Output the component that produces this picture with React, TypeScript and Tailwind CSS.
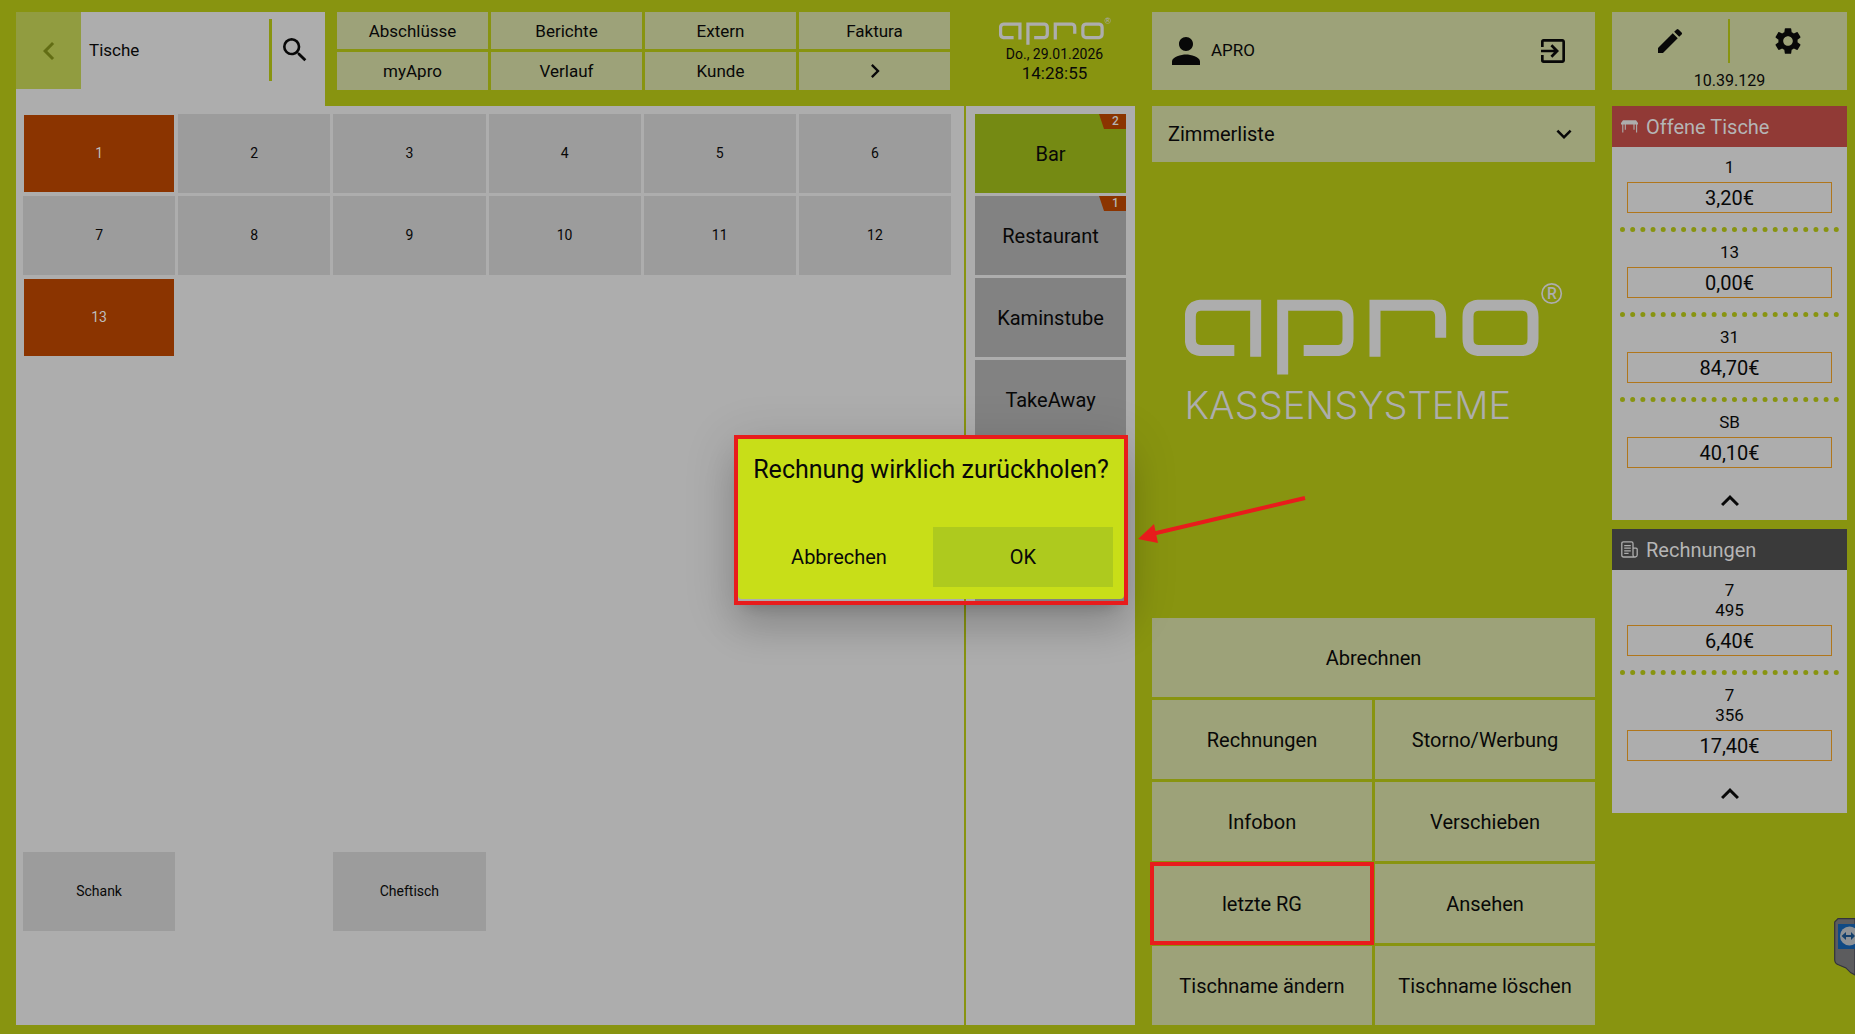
import React from "react";
import {
  MdChevronLeft,
  MdChevronRight,
  MdEdit,
  MdExitToApp,
  MdExpandLess,
  MdExpandMore,
  MdPerson,
  MdSearch,
  MdSettings,
} from "react-icons/md";

const NAV = ["Abschlüsse", "Berichte", "Extern", "Faktura", "myApro", "Verlauf", "Kunde"];

const TABLES: { name: string; open?: boolean; place?: string }[] = [
  { name: "1", open: true },
  { name: "2" },
  { name: "3" },
  { name: "4" },
  { name: "5" },
  { name: "6" },
  { name: "7" },
  { name: "8" },
  { name: "9" },
  { name: "10" },
  { name: "11" },
  { name: "12" },
  { name: "13", open: true },
  { name: "Schank", place: "col-start-1 row-start-10" },
  { name: "Cheftisch", place: "col-start-3 row-start-10" },
];

const AREAS: { name: string; count?: number; active?: boolean }[] = [
  { name: "Bar", count: 2, active: true },
  { name: "Restaurant", count: 1 },
  { name: "Kaminstube" },
  { name: "TakeAway" },
];

const ACTIONS = [
  "Abrechnen",
  "Rechnungen",
  "Storno/Werbung",
  "Infobon",
  "Verschieben",
  "letzte RG",
  "Ansehen",
  "Tischname ändern",
  "Tischname löschen",
];

const OPEN_TABLES = [
  { lines: ["1"], amount: "3,20€" },
  { lines: ["13"], amount: "0,00€" },
  { lines: ["31"], amount: "84,70€" },
  { lines: ["SB"], amount: "40,10€" },
];

const INVOICES = [
  { lines: ["7", "495"], amount: "6,40€" },
  { lines: ["7", "356"], amount: "17,40€" },
];

function AproLogo({ className }: { className: string }) {
  return (
    <svg viewBox="134 66 1134 278" className={className} role="img" aria-label="apro">
      <g fill="none" stroke="#adadad" strokeWidth="33">
        <path d="M282 271H180Q150 268 150 236V170Q150 138 180 135H346V290" />
        <path d="M427 343V135H595Q623 138 623 170V236Q623 268 595 271H490" />
        <path d="M704 290V135H873Q901 138 901 170V233" />
        <path d="M1013 135H1148Q1178 138 1178 170V236Q1178 268 1148 271H1013Q983 268 983 236V170Q983 138 1013 135Z" />
      </g>
      <circle cx="1234" cy="100" r="29" fill="none" stroke="#adadad" strokeWidth="5" />
      <text x="1235" y="117" textAnchor="middle" fontSize="47" fontWeight="500" fill="#adadad">
        R
      </text>
    </svg>
  );
}

function TableIcon() {
  return (
    <svg viewBox="0 0 17 13" className="h-[13px] w-[17px]" aria-hidden="true">
      <path d="M2 0.3H15L17 3V4.6H0V3Z" fill="#adadad" />
      <path d="M1.8 4V12.6M15.6 4V12.6M4.3 4V9.8M13 4V9.8" stroke="#adadad" strokeWidth="1.1" />
    </svg>
  );
}

function InvoiceIcon() {
  return (
    <svg viewBox="0 0 17 17" className="h-[17px] w-[17px]" aria-hidden="true" fill="none" stroke="#adadad" strokeWidth="1.3">
      <path d="M14.5 16H2.6Q0.8 16 0.8 14.3V2.4Q0.8 0.8 2.4 0.8H10.4Q12 0.8 12 2.4V14.2Q12.2 16 14.2 16Q16.2 15.8 16.2 14V8.3Q16.2 7.2 15 7.2H12" />
      <path d="M3.2 4.6H9.8M3.2 7.2H9.8M3.2 9.8H9.8M3.2 12.3H7.6" />
    </svg>
  );
}

function SideCard({
  title,
  icon,
  headClass,
  entries,
}: {
  title: string;
  icon: React.ReactNode;
  headClass: string;
  entries: { lines: string[]; amount: string }[];
}) {
  return (
    <section className="bg-[#adadad]">
      <h2 className={`flex h-[41px] items-center gap-2 pl-[9px] text-[20px] text-[#b5b5b5] ${headClass}`}>
        {icon}
        {title}
      </h2>
      <ul>
        {entries.map((e, i) => (
          <li key={i} className="px-2 pt-[10px]">
            {e.lines.map((l) => (
              <div key={l} className="text-center text-[17px] leading-5">
                {l}
              </div>
            ))}
            <button className="mx-[7px] mt-[5px] mb-[14px] flex h-[31px] w-[calc(100%-14px)] items-center justify-center border border-[#b0761c] text-[20px]">
              {e.amount}
            </button>
            {i < entries.length - 1 && <div className="border-b-[5px] border-dotted border-[#889410]" />}
          </li>
        ))}
      </ul>
      <button aria-label={`${title} einklappen`} className="flex h-[38px] w-full items-center justify-center">
        <MdExpandLess className="size-9" />
      </button>
    </section>
  );
}

function ConfirmDialog() {
  return (
    <div className="fixed inset-0 z-20 flex items-center justify-center pt-1.5 pl-[7px]">
      <div className="relative border-4 border-[#e81c1c] pb-0.5">
        <div
          role="dialog"
          aria-modal="true"
          aria-labelledby="confirm-title"
          className="h-[160px] w-[386px] rounded-b bg-[#c8de18] px-[11px]"
        >
          <h1 id="confirm-title" className="pt-[15px] text-center text-[25px] leading-8 whitespace-nowrap">
            Rechnung wirklich zurückholen?
          </h1>
          <div className="mt-[41px] grid h-[60px] grid-cols-2 gap-1 text-[20px]">
            <button>Abbrechen</button>
            <button className="bg-[#aeca1e]">OK</button>
          </div>
        </div>
        <div className="absolute inset-0 -z-10 shadow-[0_11px_15px_-7px_rgba(0,0,0,0.2),0_24px_38px_3px_rgba(0,0,0,0.14),0_9px_46px_8px_rgba(0,0,0,0.12)]" />
        <svg viewBox="0 0 170 50" className="absolute top-[57px] left-[399px] h-[50px] w-[170px]" aria-hidden="true">
          <path d="M168 2L15 38" stroke="#e81c1c" strokeWidth="4" />
          <path d="M1 43L17 28L21 47Z" fill="#e81c1c" />
        </svg>
      </div>
    </div>
  );
}

export default function App() {
  return (
    <div className="min-h-screen bg-[#889410] font-['Roboto',sans-serif] text-[#080808]">
      <main className="grid min-h-screen grid-cols-[1119fr_443fr_235fr] gap-x-[17px] pt-3 pr-2 pb-[9px] pl-4">
        <div className="flex flex-col">
          <header className="flex h-[94px]">
            <div className="flex w-[309px] items-start bg-[#adadad]">
              <button aria-label="Zurück" className="flex h-[77px] w-[65px] items-center justify-center bg-[#919c40] text-[#626d14]">
                <MdChevronLeft className="size-9" />
              </button>
              <div className="flex h-[77px] flex-1 items-center pl-2 text-[17px]">Tische</div>
              <button aria-label="Suchen" className="mt-[7px] flex h-[62px] w-14 items-center border-l-[3px] border-[#889410] pl-[7px]">
                <MdSearch className="size-8" />
              </button>
            </div>
            <nav className="ml-3 grid h-[78px] flex-1 grid-cols-4 gap-[3px] text-[17px]">
              {NAV.map((n) => (
                <button key={n} className="bg-[#9da279] pt-0.5">
                  {n}
                </button>
              ))}
              <button aria-label="Weiter" className="flex items-center justify-center bg-[#9da279]">
                <MdChevronRight className="size-7" />
              </button>
            </nav>
            <div className="flex w-[185px] flex-col items-center pt-[5px] pl-6">
              <AproLogo className="h-7 w-[112px]" />
              <div className="pt-px text-[14px] leading-4">Do., 29.01.2026</div>
              <div className="text-[17px] leading-[22px]">14:28:55</div>
            </div>
          </header>
          <div className="flex flex-1 bg-[#adadad]">
            <div className="grid flex-1 auto-rows-[79px] grid-cols-6 gap-[3px] pt-2 pr-[13px] pl-[7px] text-[14px]">
              {TABLES.map((t) => (
                <button
                  key={t.name}
                  className={`${t.place ?? ""} ${
                    t.open ? "m-px bg-[#8b3400] text-[#bdbdbd]" : "bg-[#9c9c9c]"
                  }`}
                >
                  {t.name}
                </button>
              ))}
            </div>
            <div className="flex w-[171px] flex-col gap-[3px] border-l-2 border-[#889410] px-[9px] pt-2 text-[20px]">
              {AREAS.map((a) => (
                <button key={a.name} className={`relative h-[79px] ${a.active ? "bg-[#758a13]" : "bg-[#828282]"}`}>
                  {a.name}
                  {a.count && (
                    <span className="absolute top-0 right-0 h-[15px] w-[27px] bg-[#8b3400] pl-[6px] text-center text-[12px] leading-[15px] font-medium text-[#b5b5b5] [clip-path:polygon(0_0,100%_0,100%_100%,5px_100%)]">
                      {a.count}
                    </span>
                  )}
                </button>
              ))}
              <div className="h-[79px] bg-[#828282]" />
              <div className="h-[79px] bg-[#828282]" />
            </div>
          </div>
        </div>

        <div className="flex flex-col">
          <header className="flex h-[78px] items-center bg-[#9da279] pr-[26px] pl-[13px] text-[17px]">
            <MdPerson className="size-[42px]" />
            <span className="ml-1 flex-1">APRO</span>
            <button aria-label="Abmelden">
              <MdExitToApp className="size-8" />
            </button>
          </header>
          <div className="relative mt-4">
            <select aria-label="Zimmerliste" className="h-14 w-full appearance-none bg-[#9da279] pl-4 text-[20px]">
              <option>Zimmerliste</option>
            </select>
            <MdExpandMore className="pointer-events-none absolute top-[13px] right-4 size-[30px]" />
          </div>
          <div className="flex flex-1 flex-col items-center pt-[120px]">
            <AproLogo className="h-[93px] w-[378px]" />
            <div className="w-[378px] pt-[10px] font-['Inter',sans-serif] text-[38px] leading-10 font-light text-[#adadad]">
              KASSENSYSTEME
            </div>
          </div>
          <div className="grid auto-rows-[79px] grid-cols-2 gap-[3px] text-[20px]">
            {ACTIONS.map((a, i) => (
              <button
                key={a}
                className={`bg-[#9da279] ${i === 0 ? "col-span-2" : ""} ${
                  a === "letzte RG" ? "relative z-10 outline-4 -outline-offset-2 outline-[#e81c1c]" : ""
                }`}
              >
                {a}
              </button>
            ))}
          </div>
        </div>

        <aside className="flex flex-col">
          <header className="h-[78px] bg-[#9da279]">
            <div className="grid grid-cols-2 pt-[7px]">
              <button aria-label="Bearbeiten" className="flex h-11 items-center justify-center border-r-2 border-[#889410]">
                <MdEdit className="size-8" />
              </button>
              <button aria-label="Einstellungen" className="flex h-11 items-center justify-center">
                <MdSettings className="size-8" />
              </button>
            </div>
            <div className="pt-2 text-center text-[16px] leading-5">10.39.129</div>
          </header>
          <div className="mt-4 flex flex-col gap-[9px]">
            <SideCard title="Offene Tische" icon={<TableIcon />} headClass="bg-[#913a36]" entries={OPEN_TABLES} />
            <SideCard title="Rechnungen" icon={<InvoiceIcon />} headClass="bg-[#3a3a3a]" entries={INVOICES} />
          </div>
        </aside>
      </main>

      <svg viewBox="0 0 21 58" className="fixed top-[918px] right-0 h-[58px] w-[21px]" aria-hidden="true">
        <path d="M21 0.7H4L0.7 4V42Q1 46 5 47L12 50Q16 55 21 57Z" fill="#5c5c5e" stroke="#32323c" strokeWidth="1.2" />
        <path d="M4 6H21V31H4Z" fill="#104a84" />
        <circle cx="15.5" cy="18" r="9.5" fill="#8e9296" />
        <path d="M7.5 18L12 14V17H17V14L21 18L17 22V19H12V22Z" fill="#14406c" />
      </svg>

      <ConfirmDialog />
    </div>
  );
}
